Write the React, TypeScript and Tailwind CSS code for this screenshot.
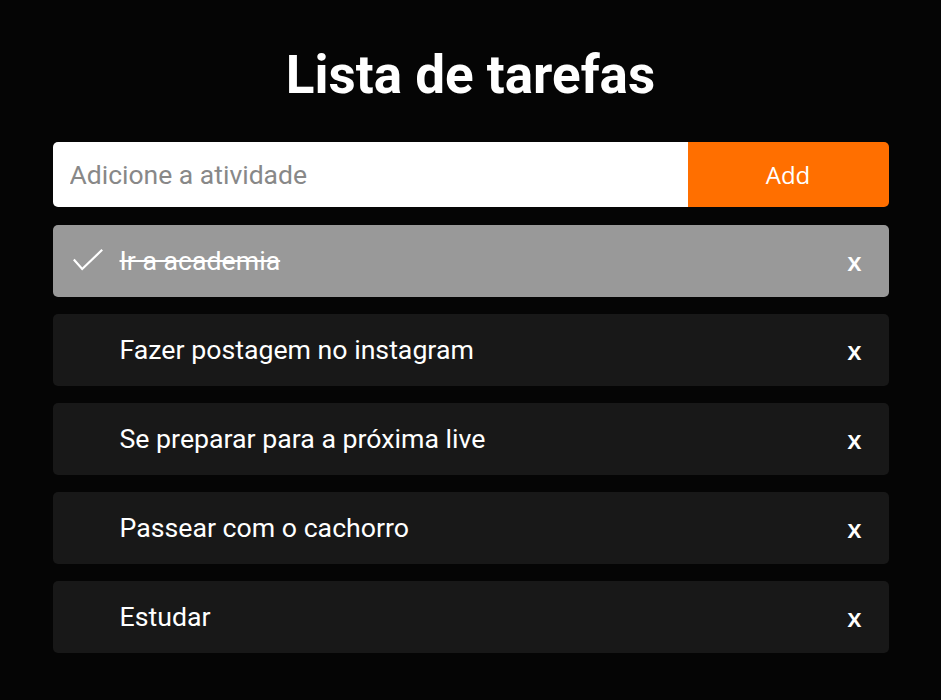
import { useState } from "react";

type Task = { id: number; text: string; done: boolean };

const initial: Task[] = [
  { id: 1, text: "Ir a academia", done: true },
  { id: 2, text: "Fazer postagem no instagram", done: false },
  { id: 3, text: "Se preparar para a próxima live", done: false },
  { id: 4, text: "Passear com o cachorro", done: false },
  { id: 5, text: "Estudar", done: false },
];

const App = () => {
  const [tasks, setTasks] = useState<Task[]>(initial);
  const [value, setValue] = useState("");

  const add = () => {
    if (!value.trim()) return;
    setTasks([...tasks, { id: Date.now(), text: value, done: false }]);
    setValue("");
  };

  return (
    <div className="min-h-[700px] bg-[#050505] font-['Roboto',sans-serif] text-white">
      <div className="mx-auto w-[836px] pt-[44px]">
        <h1 className="text-center text-[53px] font-bold leading-[62px] mb-[36px]">
          Lista de tarefas
        </h1>

        <div className="flex h-[65px] rounded-[5px] overflow-hidden mb-[18px]">
          <input
            value={value}
            onChange={(e) => setValue(e.target.value)}
            placeholder="Adicione a atividade"
            className="flex-1 bg-white px-[17px] text-[26.5px] text-[#333] placeholder:text-[#888] outline-none"
          />
          <button
            onClick={add}
            className="w-[201px] bg-[#ff6f00] text-[24px] text-white font-['Open_Sans',sans-serif]"
          >
            Add
          </button>
        </div>

        <ul className="flex flex-col gap-[17px]">
          {tasks.map((t) => (
            <li
              key={t.id}
              onClick={() =>
                setTasks(tasks.map((x) => (x.id === t.id ? { ...x, done: !x.done } : x)))
              }
              className={`flex items-center h-[72px] rounded-[5px] pl-[20px] pr-[27px] cursor-pointer ${
                t.done ? "bg-[#999999]" : "bg-[#181818]"
              }`}
            >
              <span className="w-[47px] flex items-center">
                {t.done && (
                  <svg width="30" height="22" viewBox="0 0 30 22" fill="none" className="-mt-[2px]">
                    <path d="M0.8 10.5 L9.2 20 L29.2 0.8" stroke="white" strokeWidth="2.2" />
                  </svg>
                )}
              </span>
              <span className={`flex-1 text-[26.7px] ${t.done ? "line-through" : ""}`}>
                {t.text}
              </span>
              <button
                onClick={(e) => {
                  e.stopPropagation();
                  setTasks(tasks.filter((x) => x.id !== t.id));
                }}
                className="text-[26px] font-semibold font-['Open_Sans',sans-serif]"
              >
                x
              </button>
            </li>
          ))}
        </ul>
      </div>
    </div>
  );
};

export default App;
